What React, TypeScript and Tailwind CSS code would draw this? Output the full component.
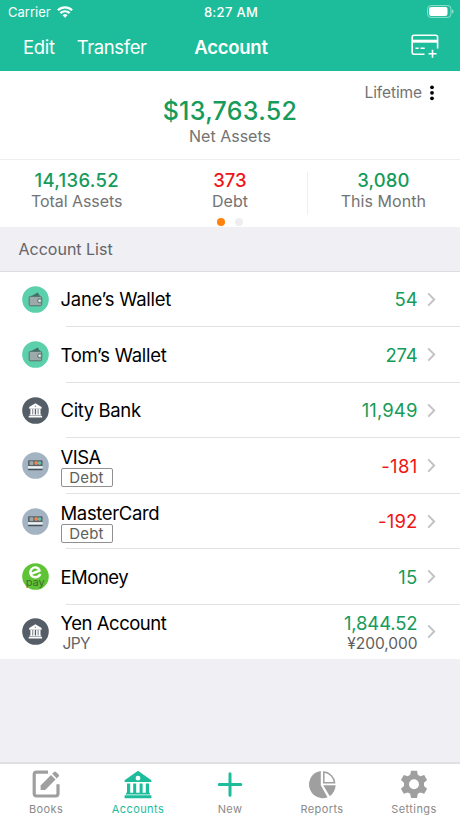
import React from "react";

type Kind = "wallet" | "bank" | "card" | "epay";

interface Account {
  name: string;
  nameClass: string;
  kind: Kind;
  amount: string;
  amountClass: string;
  negative?: boolean;
  tag?: string;
  currency?: string;
  original?: string;
}

const accounts: Account[] = [
  { name: "Jane’s Wallet", nameClass: "tracking-[-0.28px]", kind: "wallet", amount: "54", amountClass: "tracking-[-0.1px]" },
  { name: "Tom’s Wallet", nameClass: "tracking-[-0.28px]", kind: "wallet", amount: "274", amountClass: "tracking-[-0.2px]" },
  { name: "City Bank", nameClass: "tracking-[-0.38px]", kind: "bank", amount: "11,949", amountClass: "tracking-[0.1px]" },
  { name: "VISA", nameClass: "tracking-[-0.55px]", kind: "card", amount: "-181", amountClass: "tracking-[0.3px]", negative: true, tag: "Debt" },
  { name: "MasterCard", nameClass: "tracking-[-0.36px]", kind: "card", amount: "-192", amountClass: "tracking-[0.15px]", negative: true, tag: "Debt" },
  { name: "EMoney", nameClass: "tracking-[-0.5px]", kind: "epay", amount: "15", amountClass: "tracking-[0.3px]" },
  { name: "Yen Account", nameClass: "tracking-[-0.46px]", kind: "bank", amount: "1,844.52", amountClass: "tracking-[-0.15px]", currency: "JPY", original: "¥200,000" },
];

function AccountIcon({ kind }: { kind: Kind }) {
  if (kind === "wallet")
    return (
      <svg viewBox="0 0 27 27" className="size-[27px]">
        <circle cx="13.5" cy="13.5" r="13.3" fill="#5bd0ab" />
        <path d="m8.4 10.6 7.4-4 2.4 4Z" fill="#3f7268" />
        <rect x="7.2" y="10.4" width="12.4" height="9.4" rx="1" fill="#9eaaaa" stroke="#56716c" strokeWidth="1" />
        <path d="M19.8 12.9h-2.4a1.9 1.9 0 0 0 0 3.8h2.4Z" fill="#bcc7c7" stroke="#4c6963" strokeWidth=".8" />
        <circle cx="17.5" cy="14.8" r=".7" fill="#f4f7f7" />
      </svg>
    );
  if (kind === "bank")
    return (
      <svg viewBox="0 0 27 27" className="size-[27px]">
        <circle cx="13.5" cy="13.5" r="13.3" fill="#555e66" />
        <path d="M13.4 6.2 19.6 10v1.7H7.2V10Z" fill="#fff" />
        <path d="M8.4 12h2v6h-2zM11.2 12h1.6v6h-1.6zM14.1 12h1.6v6h-1.6zM16.5 12h2v6h-2zM7.5 17.4h11.8v1.2H7.5zM6.7 19h13.4v1.5H6.7z" fill="#fff" />
        <circle cx="13.4" cy="9.3" r=".8" fill="#8d959d" />
      </svg>
    );
  if (kind === "card")
    return (
      <svg viewBox="0 0 27 27" className="size-[27px]">
        <circle cx="13.5" cy="13.5" r="13.3" fill="#a3b3c1" />
        <rect x="6" y="8.2" width="14.6" height="6.2" rx=".9" fill="#59646b" />
        <rect x="7.6" y="9.3" width="3.8" height="3.6" rx=".6" fill="#9ba9a9" />
        <circle cx="14.2" cy="11.1" r="2" fill="#ee8150" />
        <circle cx="17.6" cy="11.1" r="1.8" fill="#6cbfa6" />
        <path d="M6 14.2h14.6v2.5H6z" fill="#f1f4f6" />
        <path d="M6 16.7h14.6v.8q0 .8-.8.8h-13Q6 18.3 6 17.5z" fill="#46525a" />
      </svg>
    );
  return (
    <svg viewBox="0 0 27 27" className="size-[27px]">
      <circle cx="13.5" cy="13.5" r="13.3" fill="#5fc435" />
      <path d="M9.3 10.8 17.6 7.6C16.4 4.1 12.3 3.4 9.7 6 7 9 8.6 14.2 12.8 14.2c2.6 0 4.6-1.1 5.6-3.2" fill="none" stroke="#fff" strokeWidth="2.4" strokeLinejoin="round" />
      <text x="13.3" y="22.9" textAnchor="middle" fontSize="9.8" textLength="19" lengthAdjust="spacingAndGlyphs" fill="#3f6b30" fontFamily="Inter, sans-serif">pay</text>
    </svg>
  );
}

function Chevron() {
  return (
    <svg viewBox="0 0 9 15" className="ml-[9.5px] h-[15px] w-[9px] shrink-0" fill="none" stroke="#c2c2c6" strokeWidth="1.9">
      <path d="m1.2 1.4 6 6.1-6 6.1" />
    </svg>
  );
}

function AccountRow({ account, last }: { account: Account; last: boolean }) {
  const left = account.tag || account.currency ? "pt-[3px]" : "pt-px";
  const right = account.original ? "pt-[3px]" : "pt-px";
  return (
    <li className={`flex bg-white pl-[22px] ${last ? "h-[54.5px]" : "h-[55.5px]"}`}>
      <div className="flex w-[38.5px] shrink-0 items-center">
        <AccountIcon kind={account.kind} />
      </div>
      <div className="relative flex flex-1 items-center pr-6">
        <div className={`flex flex-1 flex-col items-start ${left}`}>
          <span className={`text-[18.5px] leading-[21px] text-black ${account.nameClass}`}>{account.name}</span>
          {account.tag && (
            <span className="flex h-[19px] w-[52px] items-center justify-center rounded-[2px] border border-[#909090] text-[15px] leading-none tracking-[0.2px] text-[#606060]">
              {account.tag}
            </span>
          )}
          {account.currency && <span className="ml-[2px] text-[15.5px] leading-[20px] tracking-[-0.6px] text-[#636363]">{account.currency}</span>}
        </div>
        <div className={`flex flex-col items-end ${right}`}>
          <span className={`text-[18.5px] leading-[21px] ${account.amountClass} ${account.negative ? "text-[#f01414]" : "text-[#169b5b]"}`}>{account.amount}</span>
          {account.original && <span className="text-[15.5px] leading-[20px] tracking-[-0.05px] text-[#5e5e5e]">{account.original}</span>}
        </div>
        <Chevron />
        {!last && <div className="absolute right-0 bottom-0 left-[5px] h-px bg-[#e2e2e3]" />}
      </div>
    </li>
  );
}

function Stat({ value, label, valueClass, labelClass }: { value: string; label: string; valueClass: string; labelClass: string }) {
  return (
    <div className="flex flex-1 flex-col items-center pt-[9px]">
      <span className={`text-[18.5px] leading-[22px] font-medium ${valueClass}`}>{value}</span>
      <span className={`text-[16px] leading-[21px] text-[#737373] ${labelClass}`}>{label}</span>
    </div>
  );
}

const tabs = [
  {
    label: "Books",
    icon: (
      <>
        <path d="M16 2.2H4.6Q2.2 2.2 2.2 4.6v19q0 2.4 2.4 2.4h19q2.4 0 2.4-2.4V14.2" fill="none" stroke="currentColor" strokeWidth="3.2" />
        <path d="M8.6 15.4 19 5l4.6 4.6L13.2 20H8.6Z" fill="currentColor" />
        <path d="M20.2 3.8 22 2q1-1 2 0l2.6 2.6q1 1 0 2l-1.8 1.8Z" fill="currentColor" />
      </>
    ),
  },
  {
    label: "Accounts",
    icon: (
      <>
        <path fillRule="evenodd" d="M14 .8 27.4 10.3v1.8H.6v-1.8ZM14 5.8a2.4 2.4 0 1 0 0 4.8 2.4 2.4 0 0 0 0-4.8Z" fill="currentColor" />
        <path d="M3 13.5h3.2v10H3zM9.2 13.5h3v10h-3zM15.6 13.5h3v10h-3zM21.8 13.5H25v10h-3.2zM2 22.8h24v1.7H2zM.6 25.3h26.8v3H.6z" fill="currentColor" />
      </>
    ),
  },
  { label: "New", icon: <path d="M14 3.8v21.4M3.2 14.5h21.6" stroke="currentColor" strokeWidth="3" strokeLinecap="round" /> },
  {
    label: "Reports",
    icon: (
      <>
        <path d="M12.8.9v14.3l6.7 12.1A13.7 13.7 0 1 1 12.8.9Z" fill="currentColor" />
        <path d="M15.8 2.1a11.8 11.8 0 0 1 10.8 10.7H15.8Z" fill="none" stroke="currentColor" strokeWidth="1.5" />
        <path d="M15.2 15.3h12.4q-.2 6.8-5.8 10.9Z" fill="currentColor" />
      </>
    ),
  },
  {
    label: "Settings",
    icon: (
      <path
        fill="currentColor"
        fillRule="evenodd"
        d="M11 .8h6l.8 4 2.4 1.4 4-1.3 2.9 5-3.1 2.8v3.2l3.1 2.8-2.9 5-4-1.3-2.4 1.4-.8 4.1h-6l-.8-4.1-2.4-1.4-4 1.3-2.9-5L4 15.9v-3.2L.9 9.9l2.9-5 4 1.3 2.4-1.4ZM14 9.3a5 5 0 1 0 0 10 5 5 0 0 0 0-10Z"
      />
    ),
  },
];

export default function App() {
  return (
    <div className="flex h-[818px] w-[460px] flex-col overflow-hidden bg-[#efeff4] font-['Inter','Liberation_Sans',sans-serif]">
      <header className="h-[71px] shrink-0 bg-[#1dbd9b] text-white">
        <div className="grid h-[24px] grid-cols-3 items-center pr-[6px] pl-2">
          <div className="flex items-center gap-[6px]">
            <span className="text-[13px] leading-none">Carrier</span>
            <svg viewBox="0 0 16 12" className="-mt-px h-[12px] w-[16px]" fill="none" stroke="white" strokeWidth="2.2">
              <path d="M.9 4.3a10.2 10.2 0 0 1 14.2 0M3.4 7.1a6.6 6.6 0 0 1 9.2 0" />
              <path d="m8 11.8-2.5-2.5a3.6 3.6 0 0 1 5 0Z" fill="white" stroke="none" />
            </svg>
          </div>
          <span className="text-center text-[13px] leading-none font-medium tracking-[0.3px]">8:27 AM</span>
          <svg viewBox="0 0 27 13" className="-mt-px h-[13px] w-[27px] justify-self-end">
            <rect x=".6" y=".6" width="23.4" height="11.8" rx="3.2" fill="none" stroke="#94dfce" />
            <rect x="2.1" y="2.1" width="18.4" height="8.8" rx="1.8" fill="white" />
            <path d="M25 4.5q1.6.6 1.6 2t-1.6 2Z" fill="#94dfce" />
          </svg>
        </div>
        <div className="grid h-[47px] grid-cols-3 items-center pr-[21px] pl-[23px]">
          <div className="flex gap-[22px] text-[18.5px] leading-none tracking-[-0.3px] whitespace-nowrap">
            <span>Edit</span>
            <span className="tracking-[-0.4px]">Transfer</span>
          </div>
          <span className="text-center text-[18.5px] leading-none font-semibold tracking-[-0.25px]">Account</span>
          <svg viewBox="0 0 28 25" className="-mt-[3px] h-[25px] w-[28px] justify-self-end" fill="none" stroke="white" strokeWidth="1.6">
            <path d="M13.5 20.2H3.2Q1.2 20.2 1.2 18.2V3.3q0-2 2-2h21.4q2 0 2 2v11.2" />
            <path d="M1.2 7.2h25.4" strokeWidth="3" />
            <path d="M4.5 14.2h3.2M9.5 14.2h4.2M21.5 15.8v8M17.5 19.8h8" />
          </svg>
        </div>
      </header>

      <section className="h-[156px] shrink-0 bg-white">
        <div className="relative flex h-[88px] flex-col items-center pt-[24px]">
          <span className="text-[25px] leading-[32px] font-medium tracking-[0.3px] text-[#169b5b]">$13,763.52</span>
          <span className="text-[16px] leading-[19px] text-[#737373]">Net Assets</span>
          <div className="absolute top-[13px] right-[25px] flex items-center gap-[7px]">
            <span className="text-[15.5px] leading-[18px] tracking-[-0.1px] text-[#737373]">Lifetime</span>
            <svg viewBox="0 0 6 16" className="h-[16px] w-[6px]">
              <circle cx="3" cy="2.3" r="1.9" />
              <circle cx="3" cy="7.8" r="1.9" />
              <circle cx="3" cy="13.3" r="1.9" />
            </svg>
          </div>
        </div>
        <div className="relative flex h-[68px] border-t border-[#eeeeef]">
          <Stat value="14,136.52" label="Total Assets" valueClass="tracking-[0.3px] text-[#169b5b]" labelClass="tracking-[-0.05px]" />
          <Stat value="373" label="Debt" valueClass="text-[#f01414]" labelClass="" />
          <div className="my-[12px] -mr-px w-px bg-[#efeff2]" />
          <Stat value="3,080" label="This Month" valueClass="tracking-[0.1px] text-[#169b5b]" labelClass="tracking-[0.05px]" />
          <div className="absolute bottom-[1px] left-[217px] flex gap-[10px]">
            <i className="size-[8px] rounded-full bg-[#ff820d]" />
            <i className="size-[8px] rounded-full bg-[#eeeef2]" />
          </div>
        </div>
      </section>

      <h2 className="flex h-[44.5px] shrink-0 items-center border-b border-[#dddde1] pl-[18.5px] text-[16px] text-[#646468]">Account List</h2>
      <ul className="flex-1">
        {accounts.map((a, i) => (
          <AccountRow key={a.name} account={a} last={i === accounts.length - 1} />
        ))}
      </ul>

      <nav className="grid h-[56px] shrink-0 grid-cols-5 border-t-2 border-[#e0e0e2] bg-white">
        {tabs.map((tab, i) => (
          <div key={tab.label} className={`flex flex-col items-center pt-[6px] ${i === 1 || i === 2 ? "text-[#1dbd9b]" : "text-[#9f9f9f]"}`}>
            <svg viewBox="0 0 28 29" className="h-[29px] w-[28px]">{tab.icon}</svg>
            <span className={`mt-[3px] text-[11px] leading-[14px] tracking-[0.4px] ${i === 1 ? "text-[#1dbd9b]" : "text-[#8a8a8a]"}`}>{tab.label}</span>
          </div>
        ))}
      </nav>
    </div>
  );
}
